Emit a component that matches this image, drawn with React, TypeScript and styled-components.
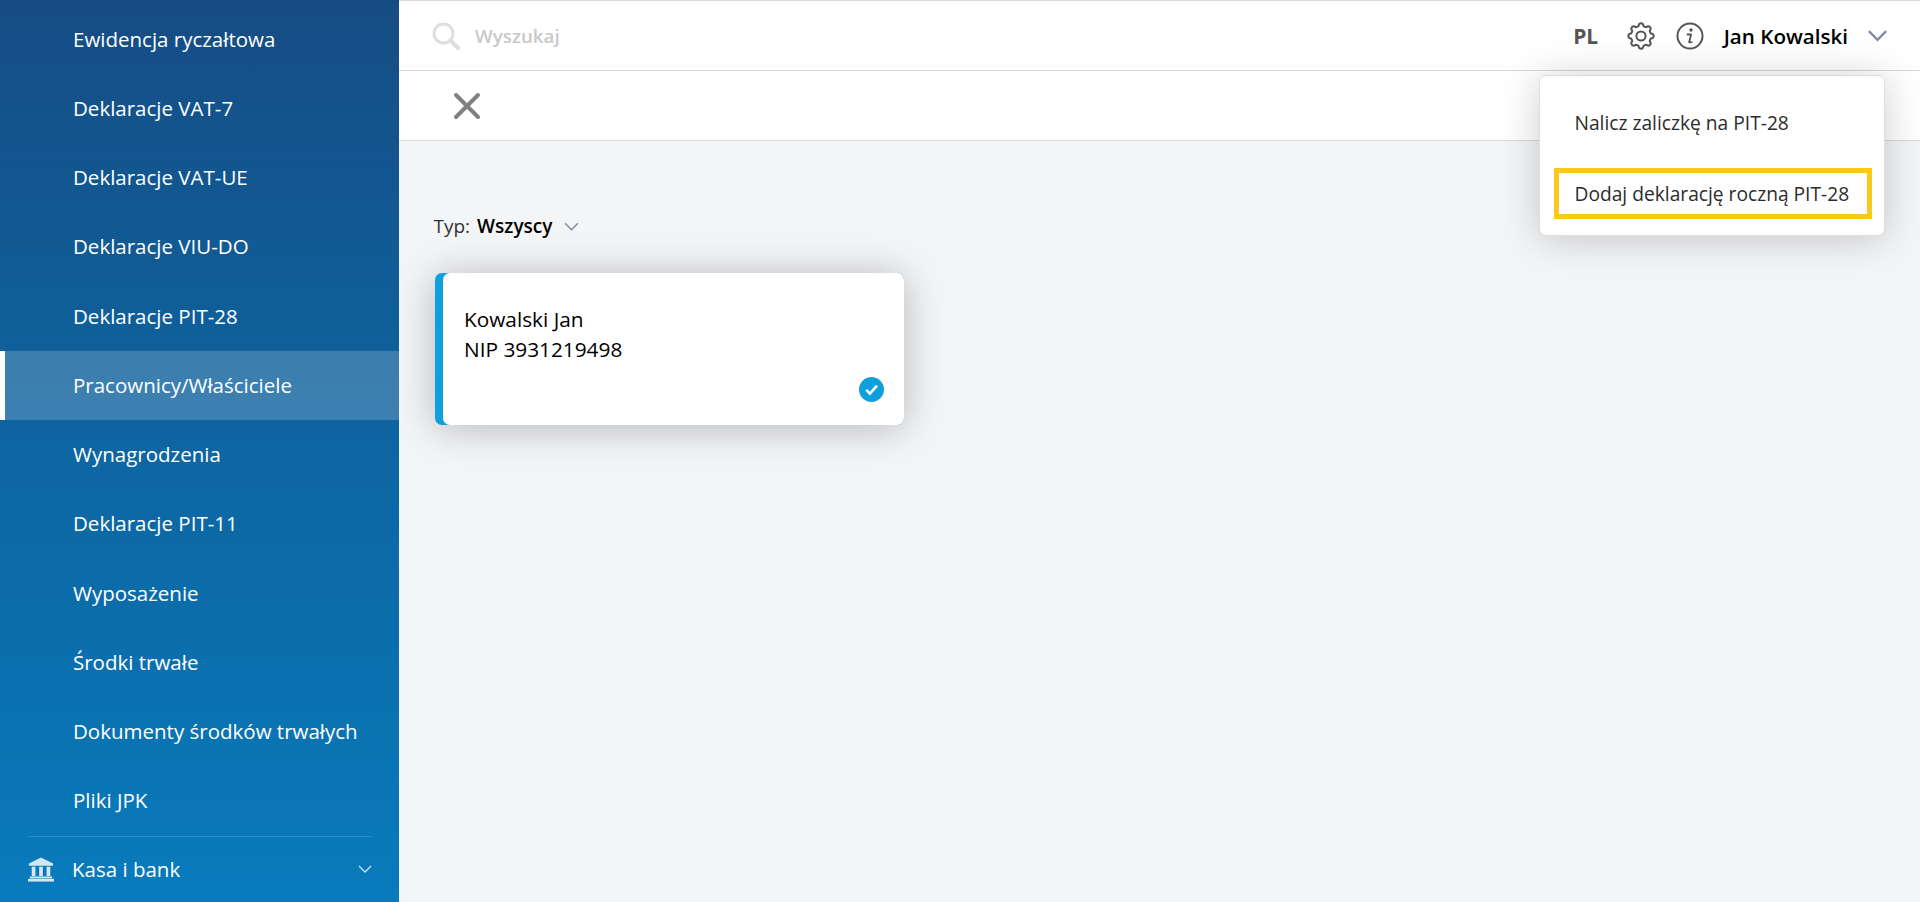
import React from "react";
import styled, { createGlobalStyle } from "styled-components";

const Global = createGlobalStyle`
  html, body { margin: 0; padding: 0; height: 100%; overflow: hidden; }
  body { font-family: "Open Sans", "Noto Sans", sans-serif; background: #f4f5f7; }
  #root { height: 100%; }
`;

const Page = styled.div`
  display: flex;
  width: 1920px;
  height: 902px;
  overflow: hidden;
`;

const Sidebar = styled.nav`
  width: 399px;
  flex: none;
  height: 902px;
  background: linear-gradient(180deg, #164c84 0%, #0f619c 40%, #087bbc 100%);
  overflow: hidden;
  padding-top: 4.5px;
  box-sizing: border-box;
  display: flex;
  flex-direction: column;
`;

const NavItem = styled.div<{ $active?: boolean }>`
  height: 69.25px;
  flex: none;
  box-sizing: border-box;
  display: flex;
  align-items: center;
  padding-left: ${(p) => (p.$active ? "68px" : "73px")};
  padding-bottom: 1px;
  color: #fff;
  font-size: 20.5px;
  background: ${(p) => (p.$active ? "rgba(255,255,255,0.19)" : "transparent")};
  border-left: ${(p) => (p.$active ? "5px solid #fff" : "none")};
`;

const Section = styled.div`
  margin: 0 28px;
  height: 69px;
  border-top: 1px solid rgba(255, 255, 255, 0.14);
  display: flex;
  align-items: center;
  gap: 18px;
  color: #fff;
  font-size: 20.5px;
`;

const SectionLabel = styled.span`
  flex: 1;
`;

const SectionArrow = styled.span`
  display: flex;
  margin-right: -2px;
`;

const Main = styled.div`
  flex: 1;
  display: flex;
  flex-direction: column;
  min-width: 0;
  position: relative;
`;

const TopBar = styled.header`
  height: 71px;
  flex: none;
  box-sizing: border-box;
  background: #fff;
  border-top: 1px solid #dcdcdc;
  border-bottom: 1px solid #d9d9d9;
  display: flex;
  align-items: center;
  padding: 0 31px 0 33px;
`;

const SearchText = styled.span`
  margin-left: 15px;
  font-size: 18.8px;
  font-weight: 600;
  color: #c8c9cb;
  flex: 1;
`;

const Lang = styled.span`
  font-size: 21px;
  font-weight: 700;
  color: #555;
  margin-right: 26px;
`;

const GearSlot = styled.span`
  display: flex;
  margin-right: 18px;
`;

const InfoSlot = styled.span`
  display: flex;
  margin-right: 19.5px;
`;

const UserName = styled.span`
  font-size: 20.6px;
  font-weight: 600;
  color: #000;
  margin-right: 18px;
`;

const ToolBar = styled.div`
  height: 70px;
  flex: none;
  box-sizing: border-box;
  background: #fff;
  border-bottom: 1px solid #d9d9d9;
  display: flex;
  align-items: center;
  padding-left: 54px;
`;

const Content = styled.main`
  flex: 1;
  padding: 0 36px;
`;

const Filter = styled.div`
  margin: 73px 0 0 -1.5px;
  display: flex;
  align-items: center;
  font-size: 19px;
  line-height: 24px;
  color: #333;
`;

const FilterValue = styled.span`
  margin-left: 7px;
  font-weight: 600;
  color: #000;
  margin-right: 11px;
`;

const Card = styled.article`
  margin-top: 35px;
  width: 469px;
  height: 152px;
  box-sizing: border-box;
  background: #0ea0dd;
  padding-left: 8px;
  border-radius: 7px;
  box-shadow: 0 3px 40px rgba(0, 0, 0, 0.26);
  display: flex;
`;

const CardBody = styled.div`
  flex: 1;
  background: #fff;
  border-radius: 7px;
  padding: 31px 0 0 21px;
  position: relative;
  font-size: 20.8px;
  line-height: 30px;
  color: #000;
`;

const CheckBadge = styled.span`
  position: absolute;
  right: 20px;
  bottom: 23px;
  width: 25px;
  height: 25px;
  border-radius: 50%;
  background: #0ea0dd;
  display: flex;
  align-items: center;
  justify-content: center;
`;

const Menu = styled.div`
  position: absolute;
  top: 75px;
  left: 1140px;
  width: 346px;
  height: 161px;
  box-sizing: border-box;
  background: #fff;
  border: 1px solid #dedede;
  border-radius: 7px;
  box-shadow: 0 3px 40px rgba(0, 0, 0, 0.2);
  padding: 0 12px 0 14px;
  display: flex;
  flex-direction: column;
`;

const MenuItem = styled.div<{ $marked?: boolean }>`
  box-sizing: border-box;
  height: ${(p) => (p.$marked ? "51px" : "92px")};
  display: flex;
  align-items: center;
  padding-left: ${(p) => (p.$marked ? "15.5px" : "20.5px")};
  font-size: 19.2px;
  color: #2c2c2c;
  border: ${(p) => (p.$marked ? "5px solid #fdc81e" : "none")};
`;

const Chevron = ({ size, color, width }: { size: number; color: string; width: number }) => (
  <svg width={size} height={size} viewBox="0 0 16 16" fill="none">
    <path d="M2 5l6 6 6-6" stroke={color} strokeWidth={width} />
  </svg>
);

function gearPath(cx: number, cy: number, outer: number, inner: number, teeth: number) {
  const pts: string[] = [];
  const step = (Math.PI * 2) / teeth;
  for (let i = 0; i < teeth; i++) {
    const a = i * step - Math.PI / 2;
    const p = (r: number, d: number) =>
      `${(cx + r * Math.cos(a + d * step)).toFixed(2)} ${(cy + r * Math.sin(a + d * step)).toFixed(2)}`;
    pts.push(`${i === 0 ? "M" : "L"}${p(inner, -0.3)}`);
    pts.push(`C${p(outer * 1.02, -0.26)} ${p(outer * 1.02, 0.26)} ${p(inner, 0.3)}`);
    pts.push(`Q${p(inner * 0.94, 0.5)} ${p(inner, 0.7)}`);
  }
  return pts.join(" ") + "Z";
}

const items = [
  "Ewidencja ryczałtowa",
  "Deklaracje VAT-7",
  "Deklaracje VAT-UE",
  "Deklaracje VIU-DO",
  "Deklaracje PIT-28",
  "Pracownicy/Właściciele",
  "Wynagrodzenia",
  "Deklaracje PIT-11",
  "Wyposażenie",
  "Środki trwałe",
  "Dokumenty środków trwałych",
  "Pliki JPK",
];

export default function App() {
  return (
    <Page>
      <Global />
      <Sidebar>
        {items.map((t) => (
          <NavItem key={t} $active={t === "Pracownicy/Właściciele"}>
            {t}
          </NavItem>
        ))}
        <Section>
          <svg width="26" height="25" viewBox="0 0 28 26" fill="#d3e6f3">
            <path d="M14 0L27 6.5V9H1V6.5Z" />
            <rect x="4" y="10" width="4" height="10" />
            <rect x="12" y="10" width="4" height="10" />
            <rect x="20" y="10" width="4" height="10" />
            <rect x="2" y="20.5" width="24" height="2" />
            <rect x="0" y="23" width="28" height="3" />
          </svg>
          <SectionLabel>Kasa i bank</SectionLabel>
          <SectionArrow>
            <Chevron size={16} color="#cfe3f2" width={1.3} />
          </SectionArrow>
        </Section>
      </Sidebar>
      <Main>
        <TopBar>
          <svg width="28" height="28" viewBox="0 0 28 28" fill="none" stroke="#dedede">
            <circle cx="11.5" cy="11.5" r="9.5" strokeWidth="3" />
            <path d="M18.5 18.5L26 26" strokeWidth="4" strokeLinecap="round" />
          </svg>
          <SearchText>Wyszukaj</SearchText>
          <Lang>PL</Lang>
          <GearSlot>
            <svg width="34" height="34" viewBox="0 0 34 34" fill="none" stroke="#555" strokeWidth="2" strokeLinejoin="round">
              <path d={gearPath(17, 17, 13.6, 10.2, 8)} />
              <circle cx="17" cy="17" r="4.6" />
            </svg>
          </GearSlot>
          <InfoSlot>
            <svg width="28" height="28" viewBox="0 0 28 28" fill="none">
              <circle cx="14" cy="14" r="12.5" stroke="#555" strokeWidth="2" />
              <circle cx="15" cy="8" r="1.7" fill="#555" />
              <path d="M11.5 12.5h3.6l-1.9 7.2c-.2.7.1.9 2.4.4" stroke="#555" strokeWidth="1.8" strokeLinecap="round" strokeLinejoin="round" />
            </svg>
          </InfoSlot>
          <UserName>Jan Kowalski</UserName>
          <Chevron size={23} color="#8389a3" width={1.6} />
        </TopBar>
        <ToolBar>
          <svg width="28" height="28" viewBox="0 0 28 28" fill="none">
            <path d="M3 3L25 25M25 3L3 25" stroke="#808080" strokeWidth="4" strokeLinecap="round" />
          </svg>
        </ToolBar>
        <Content>
          <Filter>
            Typ:
            <FilterValue>Wszyscy</FilterValue>
            <Chevron size={17} color="#8389a3" width={1.4} />
          </Filter>
          <Card>
            <CardBody>
              Kowalski Jan
              <br />
              NIP 3931219498
              <CheckBadge>
                <svg width="17" height="17" viewBox="0 0 13 13" fill="none">
                  <path d="M2.5 6.8l2.8 2.8 5.4-6" stroke="#fff" strokeWidth="2" />
                </svg>
              </CheckBadge>
            </CardBody>
          </Card>
        </Content>
        <Menu>
          <MenuItem>Nalicz zaliczkę na PIT-28</MenuItem>
          <MenuItem $marked>Dodaj deklarację roczną PIT-28</MenuItem>
        </Menu>
      </Main>
    </Page>
  );
}
